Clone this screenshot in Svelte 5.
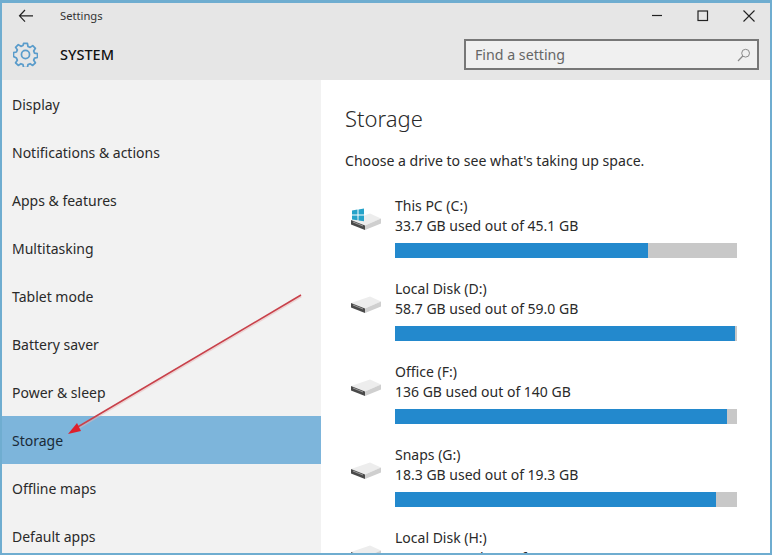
<script>
  const nav = ['Display','Notifications & actions','Apps & features','Multitasking','Tablet mode','Battery saver','Power & sleep','Storage','Offline maps','Default apps'];
  const drives = [
    { name:'This PC (C:)', used:'33.7 GB used out of 45.1 GB', pct:74, win:true },
    { name:'Local Disk (D:)', used:'58.7 GB used out of 59.0 GB', pct:99.3 },
    { name:'Office (F:)', used:'136 GB used out of 140 GB', pct:97 },
    { name:'Snaps (G:)', used:'18.3 GB used out of 19.3 GB', pct:94 },
    { name:'Local Disk (H:)', used:'77.6 MB used out of 30.0 GB', pct:1 }
  ];
</script>

<div class="window">
  <header class="head">
    <div class="titlebar">
      <svg class="back" width="16" height="14" viewBox="0 0 16 14"><path d="M7 1 1.500 6.800 7 12.600M1.500 6.800H15" fill="none" stroke="#222" stroke-width="1.200"/></svg>
      <span class="title">Settings</span>
      <div class="controls">
        <svg width="12" height="12" viewBox="0 0 12 12"><path d="M1 5.500H11" stroke="#222" stroke-width="1.200"/></svg>
        <svg width="12" height="12" viewBox="0 0 12 12"><rect x="1" y="1" width="9.500" height="9.500" fill="none" stroke="#222" stroke-width="1.200"/></svg>
        <svg width="12" height="12" viewBox="0 0 12 12"><path d="M.5.5 11.500 11.500M11.500.5.5 11.500" stroke="#222" stroke-width="1.100"/></svg>
      </div>
    </div>
    <div class="sysbar">
      <svg class="gear" width="25" height="25" viewBox="0 0 26 26">
        <path d="M11 1.500h4l.6 3.200 2.200.9 2.700-1.800 2.800 2.800-1.800 2.700.9 2.200 3.100.6v4l-3.100.6-.9 2.200 1.800 2.700-2.800 2.800-2.700-1.800-2.200.9-.6 3.200h-4l-.6-3.200-2.200-.9-2.700 1.800-2.800-2.800 1.800-2.700-.9-2.200L.5 15v-4l3.100-.6.9-2.200-1.800-2.700 2.800-2.800 2.700 1.800 2.200-.9z" fill="none" stroke="#5a9ccb" stroke-width="1.800" stroke-linejoin="round"/>
        <circle cx="13" cy="13" r="4.200" fill="none" stroke="#5a9ccb" stroke-width="1.800"/>
      </svg>
      <span class="system">SYSTEM</span>
      <div class="search">
        <span>Find a setting</span>
        <svg width="14" height="14" viewBox="0 0 14 14"><circle cx="8.600" cy="5.200" r="3.900" fill="none" stroke="#8a8a8a" stroke-width="1"/><path d="M5.800 8 1 13" stroke="#8a8a8a" stroke-width="1.200"/></svg>
      </div>
    </div>
  </header>
  <div class="body">
    <nav class="side">
      {#each nav as item}
        <div class="item" class:active={item === 'Storage'}>{item}</div>
      {/each}
    </nav>
    <main class="main">
      <h1>Storage</h1>
      <p class="lead">Choose a drive to see what's taking up space.</p>
      {#each drives as d}
        <div class="drive">
          <svg class="disk" width="32" height="36" viewBox="0 0 32 36">
            <path d="M1 24 20 17.500 31 22.500 15 29.500z" fill="#ededed"/>
            <path d="M15 29.500 31 22.500V27.500L15 34z" fill="#cfcfcf"/>
            <path d="M1 24 15 29.500V34L1 28.500z" fill="#4a4a4a"/>
            <path d="M3 26 13 30" stroke="#9a9a9a" stroke-width="1"/>
            {#if d.win}
              <path fill="#27a3c9" d="M2 14.500 7.500 13.600V18.500H2zM8.500 13.400 14 12.500V18.500H8.500zM2 19.500H7.500v4.800L2 23.400zM8.500 19.500H14v5.800L8.500 24.500z"/>
            {/if}
          </svg>
          <div class="info">
            <div>{d.name}</div>
            <div>{d.used}</div>
            <div class="bar"><div class="fill" style="width:{d.pct}%"></div></div>
          </div>
        </div>
      {/each}
    </main>
  </div>
  <svg class="arrow" width="772" height="555" viewBox="0 0 772 555">
    <path d="M301 296 76 429" stroke="#e8b4b4" stroke-width="3" fill="none" opacity=".5"/>
    <path d="M301 295 76 428" stroke="#c8404a" stroke-width="1.500" fill="none"/>
    <path d="M68 434 77 423 81 431z" fill="#de1f2c"/>
  </svg>
</div>

<style>
  :global(body) { margin: 0; }
  .window {
    position: relative;
    width: 772px;
    height: 555px;
    box-sizing: border-box;
    border-style: solid;
    border-color: #6fadd0;
    border-width: 3px 2px 2px 2px;
    overflow: hidden;
    background: #fff;
    font-family: "Noto Sans", "Open Sans", sans-serif;
    font-size: 14px;
    color: #2a2a2a;
    display: flex;
    flex-direction: column;
  }
  .head { height: 77px; flex: none; background: #e6e6e6; }
  .titlebar { height: 25px; display: flex; align-items: center; padding-left: 16px; }
  .back { margin-right: 26px; }
  .title { font-size: 11.200px; color: #333; }
  .controls { margin-left: auto; display: flex; gap: 34px; padding-right: 15px; }
  .sysbar { display: flex; align-items: center; height: 52px; padding-left: 11px; box-sizing: border-box; }
  .gear { margin-right: 22px; }
  .system { font-size: 14.500px; font-weight: 500; color: #111; }
  .search {
    margin: 1px 11px 0 auto;
    width: 295px;
    height: 31px;
    box-sizing: border-box;
    border: 2px solid #777;
    background: #f0f0f0;
    display: flex;
    align-items: center;
    justify-content: space-between;
    padding: 0 6px 0 9px;
    color: #666;
    font-size: 14.200px;
  }
  .body { flex: 1; display: flex; min-height: 0; }
  .side { width: 319px; flex: none; background: #f2f2f2; }
  .item { height: 48px; display: flex; align-items: center; padding-left: 10px; }
  .item.active { background: #7db5db; color: #1a2a38; }
  .main { flex: 1; padding-left: 24px; min-width: 0; }
  h1 { margin: 21px 0 0; font-size: 22px; font-weight: 300; line-height: 34px; }
  .lead { margin: 16px 0 0; line-height: 20px; font-size: 14.100px; }
  .drive { display: flex; height: 83px; }
  .lead + .drive { margin-top: 25px; }
  .disk { margin: 0 13px 0 5px; flex: none; }
  .info { line-height: 20px; flex: none; width: 342px; }
  .bar { height: 15px; margin-top: 7px; background: #c8c8c8; }
  .fill { height: 100%; background: #2389cd; }
  .arrow { position: absolute; left: -2px; top: -3px; pointer-events: none; }
</style>
